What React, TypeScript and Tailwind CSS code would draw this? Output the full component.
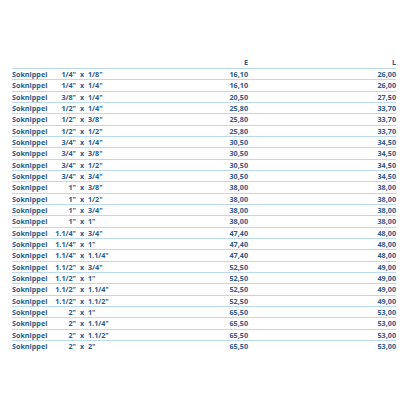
const rows: [string, string, string, string][] = [
  ['1/4"', '1/8"', '16,10', '26,00'],
  ['1/4"', '1/4"', '16,10', '26,00'],
  ['3/8"', '1/4"', '20,50', '27,50'],
  ['1/2"', '1/4"', '25,80', '33,70'],
  ['1/2"', '3/8"', '25,80', '33,70'],
  ['1/2"', '1/2"', '25,80', '33,70'],
  ['3/4"', '1/4"', '30,50', '34,50'],
  ['3/4"', '3/8"', '30,50', '34,50'],
  ['3/4"', '1/2"', '30,50', '34,50'],
  ['3/4"', '3/4"', '30,50', '34,50'],
  ['1"', '3/8"', '38,00', '38,00'],
  ['1"', '1/2"', '38,00', '38,00'],
  ['1"', '3/4"', '38,00', '38,00'],
  ['1"', '1"', '38,00', '38,00'],
  ['1.1/4"', '3/4"', '47,40', '48,00'],
  ['1.1/4"', '1"', '47,40', '48,00'],
  ['1.1/4"', '1.1/4"', '47,40', '48,00'],
  ['1.1/2"', '3/4"', '52,50', '49,00'],
  ['1.1/2"', '1"', '52,50', '49,00'],
  ['1.1/2"', '1.1/4"', '52,50', '49,00'],
  ['1.1/2"', '1.1/2"', '52,50', '49,00'],
  ['2"', '1"', '65,50', '53,00'],
  ['2"', '1.1/4"', '65,50', '53,00'],
  ['2"', '1.1/2"', '65,50', '53,00'],
  ['2"', '2"', '65,50', '53,00'],
];

const cols = 'grid grid-cols-[38px_26px_12px_100px_60px_148px] items-center';

export default function App() {
  return (
    <div className="w-[416px] h-[416px] bg-white" style={{ fontFamily: '"Open Sans", sans-serif' }}>
      <div className="ml-[12px] w-[384px] pt-[57px] text-[7.2px] font-bold text-[#2b5a8c]">
        <div className={`${cols} h-[12px] border-b-[1.5px] border-[#bcd9ee]`}>
          <span />
          <span />
          <span />
          <span />
          <span className="text-right">E</span>
          <span className="text-right">L</span>
        </div>
        {rows.map(([a, b, e, l], i) => (
          <div
            key={i}
            className={`${cols} h-[11.33px] ${i < rows.length - 1 ? 'border-b-[1.5px] border-[#bcd9ee]' : ''}`}
          >
            <span>Soknippel</span>
            <span className="text-right whitespace-nowrap">{a}</span>
            <span className="text-center">x</span>
            <span className="whitespace-nowrap">{b}</span>
            <span className="text-right">{e}</span>
            <span className="text-right">{l}</span>
          </div>
        ))}
      </div>
    </div>
  );
}
